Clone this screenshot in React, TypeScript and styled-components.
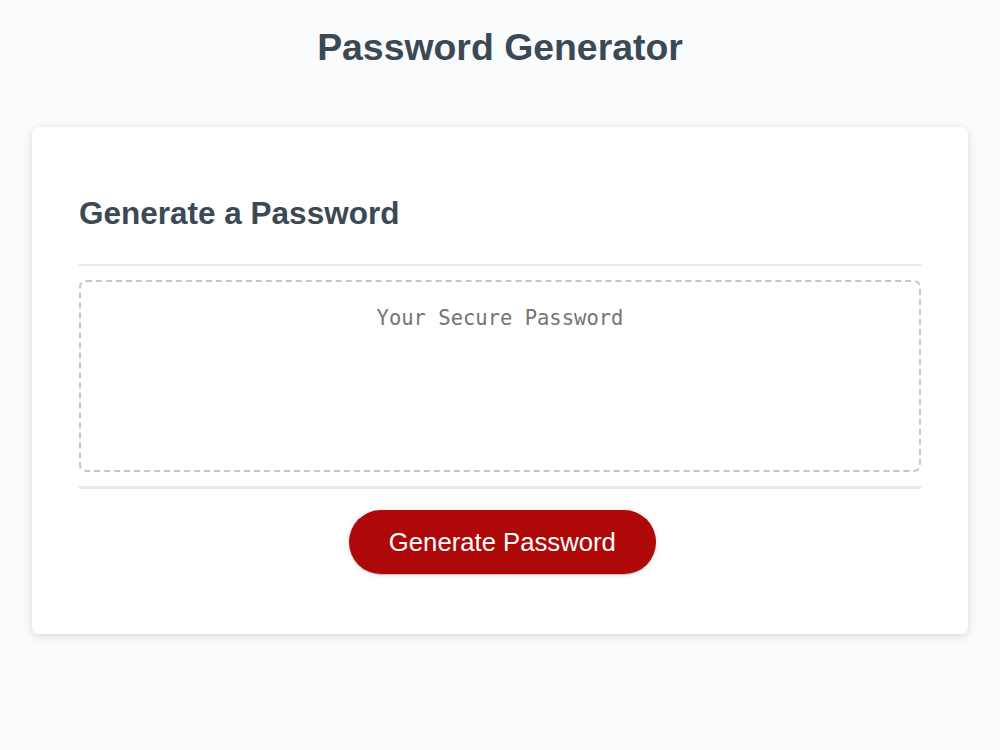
import React from "react";
import styled, { createGlobalStyle } from "styled-components";

const GlobalStyle = createGlobalStyle`
  *, *::before, *::after { box-sizing: border-box; }
  html, body { margin: 0; padding: 0; }
  body {
    background-color: #f9fbfd;
    font-family: "Liberation Sans", Arial, sans-serif;
  }
`;

const Wrapper = styled.div`
  padding: 26px 23px 40px;
`;

const Header = styled.header`
  text-align: center;
  color: #3b4954;
  padding-bottom: 59px;
`;

const Title = styled.h1`
  margin: 0;
  font-size: 37.4px;
  line-height: 42px;
  font-weight: 700;
`;

const Card = styled.section`
  background: #ffffff;
  border-radius: 6px;
  box-shadow: rgba(0, 0, 0, 0.15) 0 2px 9px 0;
  color: #3b4954;
  max-width: 936px;
  margin: 0 auto;
  padding: 35px 47px 35px;
`;

const CardHeader = styled.div`
  display: flex;
  flex-direction: column;
`;

const CardTitle = styled.h2`
  margin: 33px 0 33px;
  font-size: 31.5px;
  line-height: 36px;
  font-weight: 700;
`;

const Divider = styled.div`
  height: 2.3px;
  width: 100%;
  background: #e7e9eb;
`;

const CardBody = styled.div`
  padding: 14px 0;
`;

const PasswordBox = styled.textarea`
  appearance: none;
  display: block;
  width: 100%;
  height: 192px;
  padding: 24px 17px 0;
  font-family: "DejaVu Sans Mono", "Liberation Mono", monospace;
  font-size: 20.5px;
  line-height: 24px;
  text-align: center;
  border: 2.3px dashed #c0c7cf;
  border-radius: 7px;
  resize: none;
  overflow: hidden;
  outline: none;
  color: #3b4954;
  background: #ffffff;

  &::placeholder {
    color: #757575;
  }
`;

const CardFooter = styled.div`
  display: flex;
  flex-direction: column;
  align-items: center;
`;

const Button = styled.button`
  border: none;
  background-color: #af0808;
  border-radius: 32px;
  box-shadow: rgba(0, 0, 0, 0.1) 0 1px 6px 0, rgba(0, 0, 0, 0.2) 0 1px 1px 0;
  color: #ffffff;
  font-family: "Liberation Sans", Arial, sans-serif;
  font-size: 25.7px;
  line-height: 26px;
  height: 64px;
  margin: 21px 18.7px 25px 23.4px;
  padding: 0 40px;
  cursor: pointer;
`;

export default function App() {
  return (
    <>
      <GlobalStyle />
      <Wrapper>
        <Header>
          <Title>Password Generator</Title>
        </Header>
        <Card>
          <CardHeader>
            <CardTitle>Generate a Password</CardTitle>
            <Divider />
          </CardHeader>
          <CardBody>
            <PasswordBox
              readOnly
              placeholder="Your Secure Password"
              aria-label="Generated Password"
            />
          </CardBody>
          <CardFooter>
            <Divider />
            <Button type="button">Generate Password</Button>
          </CardFooter>
        </Card>
      </Wrapper>
    </>
  );
}
